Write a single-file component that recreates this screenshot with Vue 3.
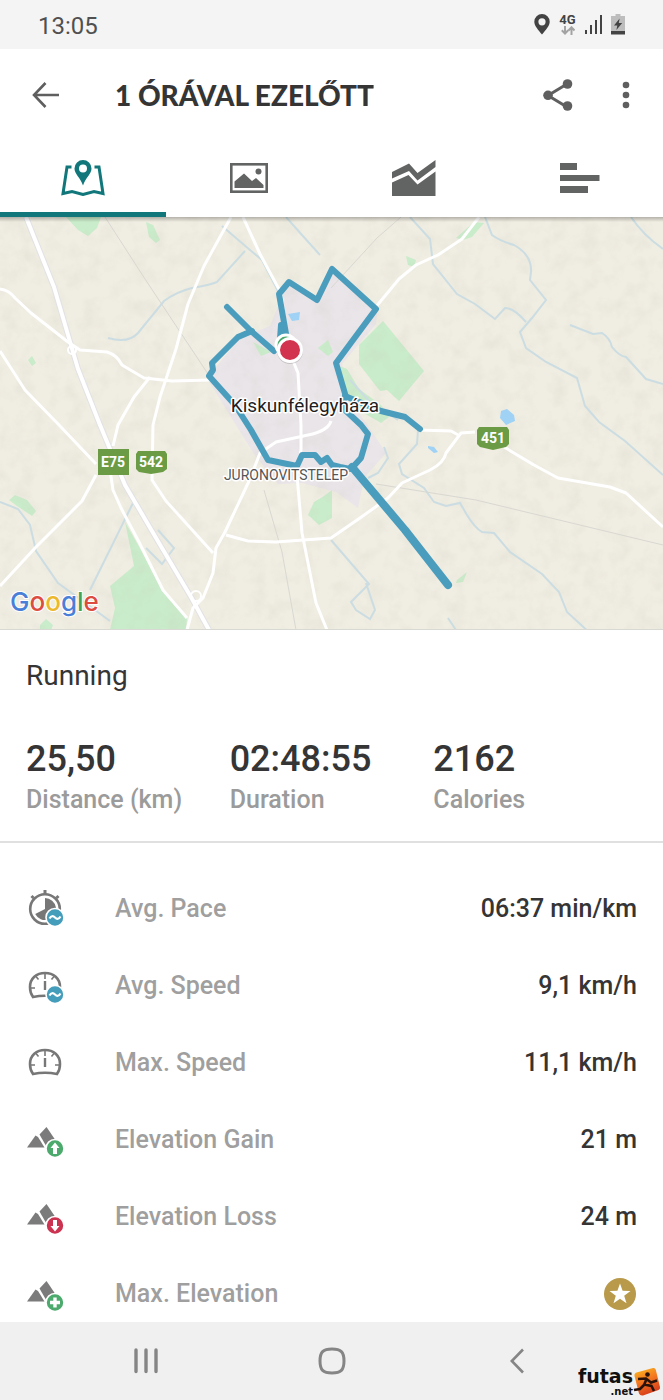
<template>
    <div class="screen">
        <div class="status-bar">
            <span class="status-time">13:05</span>
            <div class="status-icons">
                <svg width="16" height="21" viewBox="0 0 16 21" aria-hidden="true">
                    <path fill="#434343" fill-rule="evenodd" d="M8 0a7.7 7.7 0 0 0-7.7 7.7C.3 12 4.500 16 8 20.500 11.500 16 15.700 12 15.700 7.700A7.700 7.700 0 0 0 8 0zm0 4.200a3.600 3.600 0 1 1 0 7.200 3.600 3.600 0 0 1 0-7.200z" />
                </svg>
                <div class="network">
                    <span>4G</span>
                    <svg width="14" height="9" viewBox="0 0 14 9" fill="none" stroke="#a3a3a3" stroke-width="2" aria-hidden="true">
                        <path d="M4 0v7M0.800 4.300 4 7.500l3.200-3.200M10.500 9V2M7.500 4.500l3-3.200 3 3.200" />
                    </svg>
                </div>
                <svg width="18" height="20" viewBox="0 0 18 20" fill="#434343" aria-hidden="true">
                    <rect x="0" y="15" width="2" height="4" />
                    <rect x="5" y="10" width="2" height="9" />
                    <rect x="10" y="5" width="2" height="14" />
                    <rect x="15" y="0" width="2" height="19" />
                </svg>
                <svg width="14" height="21" viewBox="0 0 14 21" aria-hidden="true">
                    <path fill="#bdbdbd" d="M4.500 0h5v2H14v16H0V2h4.500z" />
                    <rect y="17" width="14" height="3.500" fill="#434343" />
                    <path fill="#434343" d="M8.600 4.500 3 11.500h3.300L5.400 16l5.800-7H7.800z" />
                </svg>
            </div>
        </div>

        <header class="toolbar">
            <button class="icon-btn" type="button" aria-label="Back">
                <svg width="27" height="26" viewBox="0 0 27 26" fill="none" stroke="#5f5f5f" stroke-width="2.600" aria-hidden="true">
                    <path d="M13.500 1 2 13l11.500 12M2 13h25" />
                </svg>
            </button>
            <h1 class="title">1 ÓRÁVAL EZELŐTT</h1>
            <button class="icon-btn" type="button" aria-label="Share">
                <svg width="30" height="32" viewBox="0 0 30 32" fill="#5f5f5f" aria-hidden="true">
                    <path d="M24 5 5 16.500 24 28" fill="none" stroke="#5f5f5f" stroke-width="3" />
                    <circle cx="24.500" cy="5" r="4.800" />
                    <circle cx="5" cy="16.300" r="4.800" />
                    <circle cx="24.500" cy="27" r="4.800" />
                </svg>
            </button>
            <button class="icon-btn more" type="button" aria-label="More">
                <svg width="8" height="28" viewBox="0 0 8 28" fill="#5f5f5f" aria-hidden="true">
                    <circle cx="4" cy="4" r="3.300" />
                    <circle cx="4" cy="14" r="3.300" />
                    <circle cx="4" cy="24" r="3.300" />
                </svg>
            </button>
        </header>

        <nav class="tabs">
            <button v-for="tab in tabs" :key="tab" type="button" :aria-label="tab"
                    :class="['tab', { active: tab === activeTab }]" @click="activeTab = tab">
                <svg v-if="tab === 'Map'" width="44" height="36" viewBox="0 0 44 36" aria-hidden="true">
                    <path fill="none" stroke="#12777a" stroke-width="3" d="M10.500 7H6L2 33.500 11 31.500l11 3 11-3 9 2L38 7h-4.500" />
                    <path fill="#12777a" fill-rule="evenodd" d="M22 0a8.500 8.500 0 0 0-8.500 8.500C13.500 14 19 17 22 25.500 25 17 30.500 14 30.500 8.500A8.500 8.500 0 0 0 22 0zm0 4.500a4 4 0 1 1 0 8 4 4 0 0 1 0-8z" />
                </svg>
                <svg v-else-if="tab === 'Photos'" width="38" height="30" viewBox="0 0 38 30" fill="#626463" aria-hidden="true">
                    <rect x="1.300" y="1.300" width="35.400" height="27.400" fill="none" stroke="#626463" stroke-width="2.600" />
                    <path d="M4.500 25v-6.500L14 10.500l8 7.500 4-3 7.500 7v3z" />
                    <circle cx="28.500" cy="8.500" r="3" />
                </svg>
                <svg v-else-if="tab === 'Charts'" width="44" height="36" viewBox="0 0 44 36" fill="#626463" aria-hidden="true">
                    <path d="M0 12 17 3.500 25.500 13 43.500 0v7L25.500 20.500 17 11 0 18.500z" />
                    <path d="M0 22.500 16.500 15 25.500 24.500 43.500 11.500V36H0z" />
                </svg>
                <svg v-else width="40" height="30" viewBox="0 0 40 30" fill="#626463" aria-hidden="true">
                    <rect width="17" height="7" />
                    <rect y="12" width="39.500" height="6" />
                    <rect y="23" width="28" height="7" />
                </svg>
            </button>
        </nav>

        <main class="content">
            <svg class="map" viewBox="0 217 663 413" role="img" aria-label="Route map">
                <defs>
                    <linearGradient id="map-shade" x1="0" y1="0" x2="0" y2="1">
                        <stop offset="0" stop-color="#000" stop-opacity="0.25" />
                        <stop offset="1" stop-color="#000" stop-opacity="0" />
                    </linearGradient>
                    <!-- Shaded relief of the terrain layer -->
                    <filter id="map-relief" x="0" y="0" width="1" height="1">
                        <feTurbulence type="fractalNoise" baseFrequency="0.06" numOctaves="3" seed="4" />
                        <feColorMatrix values="0 0 0 0 0.6  0 0 0 0 0.58  0 0 0 0 0.5  1.2 0 0 0 -0.5" />
                    </filter>
                </defs>
                <rect y="217" width="663" height="413" fill="#f0ede2" />

                <!-- Built-up area -->
                <path fill="#eae5e9" d="M212 372 240 338l30-12 12-30 8-12 28 16 14-28 46 34-2 18-34 40 8 36 18 26 18 27-22 25-6 30-22-16-34-9-24 1-24-30-46-74z" />

                <!-- Woods and parks -->
                <g fill="#c9ecca">
                    <path d="m383 321 41 50-25 30-12-11-7 1-21-27v-19z" />
                    <path d="m339 366 8 3 12 20 22 16 8 12-8 6-24-14-12-12z" />
                    <path d="m125 522 16 28 22 42 24 26-1 12H110l5-22-5-22 24-20z" />
                    <path d="M66 217h35l-4 11-9 8-10-6zM146 222l7 3 7 15-4 3-7-6zM9 500l6-5 12 5 9 11-4 5-15-10zM456 238l18-16 10 1-12 14-9 3zM324 496l8-6v28l-13 7-11-10 6-13zM406 256l10 4-2 7-6-2zM457 580l10-8-4 10-7 1zM28 360l4-4 4 7-4 3zM318 348l10-8 5 12-5 4zM40 625l6-6 7 6-2 5H40zM253 342l18 10-10 4z" />
                </g>

                <rect y="217" width="663" height="413" filter="url(#map-relief)" opacity="0.35" />

                <!-- Lakes -->
                <g fill="#9fd2f5">
                    <path d="m501 411 6-2 7 6 1 6-9 4-6-7zM428 446l6 1 4 5-4 1-6-5zM288 314l12-2-1 8-7 1z" />
                </g>

                <!-- Streams -->
                <g class="stream">
                    <path d="M108 338q20 6 30-5l26-32q12-9 28-13 18-3 25-6l28-31M222 226l28 24 12 10 18 35M286 217l16 18 18 20" />
                    <path d="m410 217 20 22 3 25 24 30 18 10 20 15 10-11q9 0 21 14" />
                    <path d="m485 217 7 18q8 6 22 10 18 10 17 27l-1 8 16 20-14 18-12 14 6 16 20 14 31 16 8 28 14 16 26 19 38 34M631 217q12 18 32 32" />
                    <path d="m570 325 23 9 9-1q8 5 10 14 7 9 14 10l20 22 17 5" />
                    <path d="m418 430-1 14-18 20 3 10 22 14 10 14 12 4 14-3 7 12q8 13 15 17l12 1 16 19 32 22 17 18 8 20 24 22" />
                    <path d="m331 540 38 44-18 18 5 8 14 9 5-9-9-27M0 502l18 7 12 16 6 26 22 32 52 38M133 503 90 590M146 548l16 16 12-16-16-18M384 447l4 11-10 15-10 5" />
                    <path d="m350 380 20 22 28 18M448 618l8 12" />
                </g>

                <!-- Railways -->
                <path class="rail" d="m105 217 40 62 65 98M264 490l18 62 14 78M376 484l100 16 187 45M331 288l46-50 24-21" />

                <!-- Roads -->
                <path class="road-edge" d="m26 217 28 70 24 82 22 56 25 60 34 58 32 54 18 33" />
                <g class="road">
                    <path d="m26 217 28 70 24 82 22 56 25 60 34 58 32 54 18 33" stroke-width="4" />
                    <path d="m107 450 6 40 8 18 18 34 24 48 24 28" />
                    <path d="m187 630 6-22 10-10 10-25 3-25 9-16 25-53 10-26 16-11 32-7q20-4 23-14" />
                    <path d="M0 289q9 1 15 9l16 15 37 29 12 8 27 2q10 3 15 13l22 13 28 3 38-1" />
                    <path d="m231 217-27 49-16 38-12 45-16 48-7 28-1 55 14 21 47 52" />
                    <path d="m150 377-16 20-16 28-5 21M0 351l25 39 35 36 36 38M96 475l-14 26-46 46-36 39" />
                    <path d="m243 217 17 37 21 39 8 58 9 22 3 52v25l-4 25 5 58 14 70 11 27" />
                    <path d="m226 535 22 6 28 1 55-4 29-20 28-20 14-15 28-13q14-7 16-17l15-20 14-1M419 430l32 1 9 5M504 447l30 18 24 13 52 9 16 6 37 34" />
                    <path d="m479 217-17 22-24 16-22 10-17 14-24 29" />
                </g>
                <circle cx="72" cy="350" r="4" class="ramp" />
                <circle cx="196" cy="596" r="5" class="ramp" />

                <!-- Tracked route -->
                <g class="route">
                    <path d="m227 307 24 24 23 20" />
                    <path d="m252 331-14 6-26 26 1 7-4 6 26 29 16 25 17 30 29 6 5-11h13l6 7 6-4 5 7 8 2 10 2" />
                    <path d="m352 468 9-10 7-24-7-9-16-15-4-8 5-5-10-34 40-54-44-40-15 31-28-18-10 12 9 51" />
                    <path d="m281 325-1 14M345 396l36 15 24 6 15 12" />
                    <path d="m352 467 53 63 43 55" stroke-width="8" />
                </g>
                <circle cx="286" cy="345" r="10" fill="#4caa6c" stroke="#fff" stroke-width="3" />
                <circle cx="290" cy="351" r="13" fill="#777" opacity="0.3" />
                <circle cx="290" cy="350" r="11.500" fill="#d2334f" stroke="#fff" stroke-width="3" />

                <!-- Road shields -->
                <rect x="98" y="449" width="31" height="26" fill="#6b9c45" />
                <path fill="#6b9c45" d="M138 451h27l2 3v15l-4 3-12 2-12-2-3-3v-15zM479 427h28l2 3v14l-3 3-13 3-13-3-3-3v-14z" />
                <text class="shield" x="113" y="467">E75</text>
                <text class="shield" x="151" y="467">542</text>
                <text class="shield" x="493" y="443">451</text>

                <text class="town" x="305" y="412">Kiskunfélegyháza</text>
                <text class="district" x="286" y="480">JURONOVITSTELEP</text>
                <text class="google" x="10" y="611"><tspan fill="#4a7fd8">G</tspan><tspan fill="#dc4c40">o</tspan><tspan fill="#ecb82e">o</tspan><tspan fill="#4a7fd8">g</tspan><tspan fill="#3fa45b">l</tspan><tspan fill="#dc4c40">e</tspan></text>
                <rect y="217" width="663" height="5" fill="url(#map-shade)" />
                <rect y="629" width="663" height="1" fill="#d9d9d4" />
            </svg>

            <section class="summary">
                <h2 class="sport">Running</h2>
                <dl class="totals">
                    <div v-for="total in totals" :key="total.label" class="total">
                        <dd>{{ total.value }}</dd>
                        <dt>{{ total.label }}</dt>
                    </div>
                </dl>
            </section>

            <dl class="metrics">
                <div v-for="metric in metrics" :key="metric.label" class="metric">
                    <dt>
                        <svg class="metric-icon" width="40" height="40" viewBox="0 0 40 40" aria-hidden="true">
                            <g v-if="metric.icon === 'pace'">
                                <circle cx="19" cy="20" r="14.800" fill="none" stroke="#777" stroke-width="2.600" />
                                <path fill="none" stroke="#777" stroke-width="3" d="M19 1v5M7.500 9 5.500 7M30.500 9l2-2" />
                                <path fill="#777" d="M19 9a11 11 0 1 1-9.800 16L19 20z" />
                            </g>
                            <g v-else-if="metric.icon === 'speed'" fill="none" stroke="#777">
                                <path stroke-width="2.600" d="M7 31q-3-4-3-10C4 12.500 10.500 7 19 7s15 5.500 15 14q0 6-3 10-12-2.500-24 0z" />
                                <path stroke-width="1.600" d="M19 8v5M10 10.500l2.500 3M28 10.500l-2.500 3M5 22h4M29 22h4" />
                                <path stroke-width="2.400" d="M19 15v9" />
                            </g>
                            <g v-else fill="#7b7b7b">
                                <path d="M1 27.500 9.500 15.500 12 17 18.500 27.500z" />
                                <path d="M13.500 14.500 20.500 7 34.500 27.500H21z" />
                            </g>
                            <g v-if="metric.badge">
                                <circle cx="29" cy="28.500" r="9" :fill="badges[metric.badge].color" stroke="#fff" stroke-width="1.600" />
                                <path v-if="metric.badge === 'average'" d="M23.500 29.500q2.500-4 5.500-1t5.500-1" fill="none" stroke="#fff" stroke-width="2.200" />
                                <path v-else :d="badges[metric.badge].path" fill="#fff" />
                            </g>
                        </svg>
                        <span>{{ metric.label }}</span>
                    </dt>
                    <dd>
                        <template v-if="metric.value">{{ metric.value }}</template>
                        <svg v-else width="34" height="34" viewBox="0 0 34 34" role="img" aria-label="Premium">
                            <circle cx="17" cy="17" r="16" fill="#b89a4a" />
                            <path fill="#fff" d="m17 6.500 2.600 7.300 7.900.2-6.300 4.700 2.300 7.500-6.500-4.400-6.500 4.400 2.300-7.500L6.500 14l7.900-.2z" />
                        </svg>
                    </dd>
                </div>
            </dl>
        </main>

        <footer class="system-nav">
            <button type="button" aria-label="Recent apps">
                <svg width="24" height="26" viewBox="0 0 24 26" stroke="#858585" stroke-width="3.400" stroke-linecap="round" aria-hidden="true">
                    <path d="M2 2v21.500M12 2v21.500M22 2v21.500" />
                </svg>
            </button>
            <button type="button" aria-label="Home">
                <svg width="28" height="28" viewBox="0 0 28 28" fill="none" stroke="#858585" stroke-width="3" aria-hidden="true">
                    <path d="M14 2c9 0 12 3 12 12s-3 12-12 12S2 23 2 14 5 2 14 2z" />
                </svg>
            </button>
            <button type="button" aria-label="Back">
                <svg width="14" height="26" viewBox="0 0 14 26" fill="none" stroke="#858585" stroke-width="2.600" aria-hidden="true">
                    <path d="M13 1.500 1.800 13 13 24.500" />
                </svg>
            </button>
            <div class="watermark">
                <span class="watermark-text"><b>futas</b><small>.net</small></span>
                <svg width="28" height="30" viewBox="0 0 28 30" aria-hidden="true">
                    <defs>
                        <linearGradient id="badge-fill" x1="0" y1="0" x2="0.400" y2="1">
                            <stop offset="0" stop-color="#f8bd20" />
                            <stop offset="0.500" stop-color="#f47a20" />
                            <stop offset="1" stop-color="#d8401c" />
                        </linearGradient>
                    </defs>
                    <path fill="url(#badge-fill)" d="M3.500 5.500 20 1q2-.5 2.700 1.500L27 20q.5 2-1.500 3L10 28.500q-3 .5-4-2L1.500 9q-.5-2.500 2-3.500z" />
                    <circle cx="14.500" cy="7.500" r="2.300" fill="#2a1208" />
                    <path fill="none" stroke="#2a1208" stroke-width="2.600" d="m14 11-3 7-4 4-6 1M11 17.500l7.500 1.500 2.500 5M5 12l8-.5 5 4 6-2" />
                </svg>
            </div>
        </footer>
    </div>
</template>

<script setup>
import { ref } from 'vue';

const tabs = ['Map', 'Photos', 'Charts', 'Laps'];
const activeTab = ref('Map');

const totals = [
    { value: '25,50', label: 'Distance (km)' },
    { value: '02:48:55', label: 'Duration' },
    { value: '2162', label: 'Calories' },
];

const badges = {
    average: { color: '#449dbb' },
    up: { color: '#4caa6c', path: 'M29 22.500 33.500 28H31v6h-4v-6h-2.500z' },
    down: { color: '#cb3350', path: 'M29 34.500 33.500 29H31v-6h-4v6h-2.500z' },
    plus: { color: '#4caa6c', path: 'M27.300 23.500h3.400v3.300H34v3.400h-3.300v3.300h-3.400v-3.300H24v-3.400h3.300z' },
};

// A metric without a value is locked and shows the premium star
const metrics = [
    { icon: 'pace', badge: 'average', label: 'Avg. Pace', value: '06:37 min/km' },
    { icon: 'speed', badge: 'average', label: 'Avg. Speed', value: '9,1 km/h' },
    { icon: 'speed', label: 'Max. Speed', value: '11,1 km/h' },
    { icon: 'mountain', badge: 'up', label: 'Elevation Gain', value: '21 m' },
    { icon: 'mountain', badge: 'down', label: 'Elevation Loss', value: '24 m' },
    { icon: 'mountain', badge: 'plus', label: 'Max. Elevation' },
];
</script>

<style>
body {
    margin: 0;
    background: #ffffff;
}
</style>

<style scoped>
.screen {
    height: 100vh;
    display: flex;
    flex-direction: column;
    background: #ffffff;
    color: #353535;
    font-family: Roboto, "Noto Sans", sans-serif;
}

.screen svg {
    display: block;
    flex-shrink: 0;
}

h1, h2, dl, dd {
    margin: 0;
}

button {
    padding: 0;
    border: none;
    background: none;
    cursor: pointer;
}

/* Status bar */
.status-bar {
    flex-shrink: 0;
    height: 49px;
    padding: 0 38px;
    display: flex;
    align-items: center;
    justify-content: space-between;
    background: #f4f4f4;
}

.status-time {
    padding-top: 3px;
    font-size: 24px;
    color: #505050;
}

.status-icons {
    display: flex;
    align-items: center;
    gap: 8px;
}

.network {
    width: 19px;
    display: flex;
    flex-direction: column;
    align-items: center;
    font-size: 13px;
    line-height: 12px;
    font-weight: 700;
    color: #434343;
}

/* Toolbar */
.toolbar {
    flex-shrink: 0;
    height: 91px;
    padding: 0 18px;
    display: flex;
    align-items: center;
}

.icon-btn {
    width: 54px;
    height: 54px;
    display: flex;
    align-items: center;
    justify-content: center;
}

.icon-btn.more {
    margin-left: 22px;
    width: 38px;
}

.title {
    flex: 1;
    margin-left: 43px;
    font-family: Lato, sans-serif;
    font-size: 28px;
    line-height: 36px;
    font-weight: 900;
}

/* Tabs */
.tabs {
    flex-shrink: 0;
    height: 77px;
    display: flex;
}

.tab {
    flex: 1;
    padding-top: 4px;
    display: flex;
    align-items: center;
    justify-content: center;
    border-bottom: 5px solid transparent;
}

.tab.active {
    border-bottom-color: #12777a;
}

/* Scrolling content */
.content {
    flex: 1;
    min-height: 0;
    overflow-y: auto;
    scrollbar-width: none;
}

.map {
    width: 100%;
    height: auto;
}

.stream {
    fill: none;
    stroke: #cbdde2;
    stroke-width: 2;
}

.rail {
    fill: none;
    stroke: #d8d8d2;
    stroke-width: 1;
}

.road {
    fill: none;
    stroke: #ffffff;
    stroke-width: 3;
    stroke-linejoin: round;
}

.road-edge {
    fill: none;
    stroke: #e2e2e6;
    stroke-width: 6;
}

.ramp {
    fill: none;
    stroke: #ffffff;
    stroke-width: 2;
}

.route {
    fill: none;
    stroke: #4b9dbd;
    stroke-width: 6;
    stroke-linecap: round;
    stroke-linejoin: round;
}

.shield {
    fill: #ffffff;
    font-size: 14px;
    font-weight: 700;
    text-anchor: middle;
}

.town,
.district {
    text-anchor: middle;
    stroke: #ffffff;
    stroke-width: 3;
    stroke-linejoin: round;
    paint-order: stroke;
}

.town {
    fill: #1f1f1f;
    font-size: 19px;
}

.district {
    fill: #555555;
    font-size: 14px;
}

.google {
    font-family: Inter, sans-serif;
    font-size: 26px;
    font-weight: 500;
    stroke: #ffffff;
    stroke-width: 2;
    paint-order: stroke;
}

/* Summary */
.summary {
    padding: 28px 26px 25px;
    border-bottom: 2px solid #e0e0e0;
}

.sport {
    font-size: 28px;
    line-height: 36px;
    font-weight: 400;
}

.totals {
    margin-top: 40px;
    display: grid;
    grid-template-columns: repeat(3, 1fr);
}

.total {
    display: flex;
    flex-direction: column;
}

.total dd {
    font-size: 36px;
    line-height: 50px;
    font-weight: 500;
}

.total dt {
    font-size: 25px;
    line-height: 32px;
    font-weight: 500;
    color: #9b9b9b;
}

/* Metric rows */
.metrics {
    padding: 27px 26px 0;
}

.metric {
    height: 77px;
    display: flex;
    align-items: center;
    justify-content: space-between;
    font-size: 25px;
    line-height: 32px;
    font-weight: 500;
}

.metric dt {
    display: flex;
    align-items: center;
    gap: 49px;
    color: #9f9f9f;
}

/* System navigation */
.system-nav {
    position: relative;
    flex-shrink: 0;
    height: 78px;
    padding: 0 53px;
    display: flex;
    background: #f0f0f0;
}

.system-nav button {
    flex: 1;
    display: flex;
    align-items: center;
    justify-content: center;
}

.watermark {
    position: absolute;
    right: 2px;
    bottom: 2px;
    display: flex;
    align-items: center;
    color: #111111;
}

.watermark-text {
    display: flex;
    flex-direction: column;
    align-items: flex-end;
    font-family: "DejaVu Sans", sans-serif;
    font-weight: 700;
}

.watermark-text b {
    font-size: 19px;
    line-height: 20px;
}

.watermark-text small {
    font-size: 10px;
    line-height: 12px;
}
</style>
